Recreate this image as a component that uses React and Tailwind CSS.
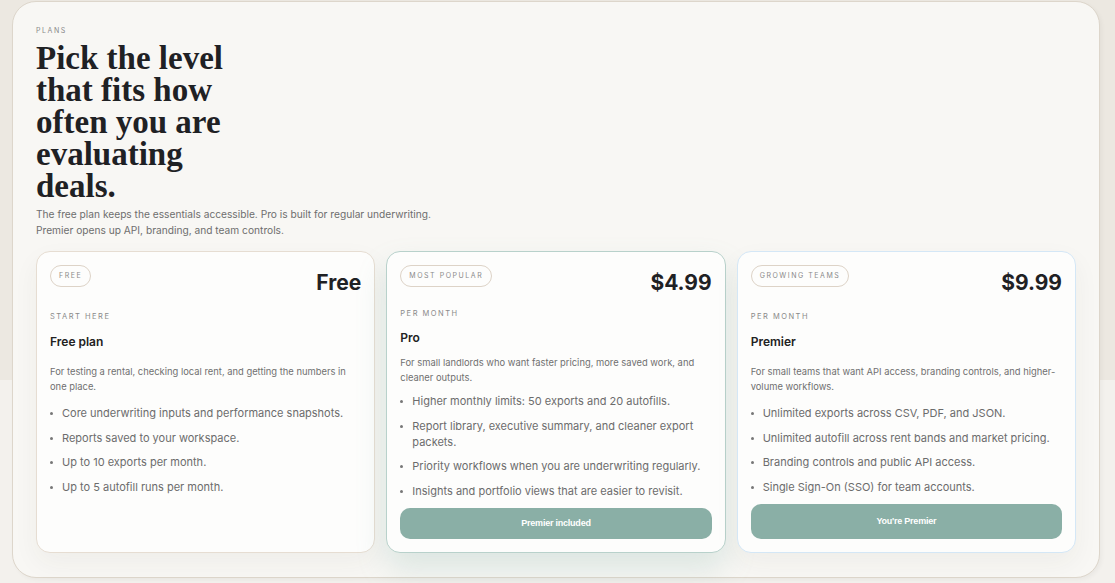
import React from 'react';

const plans = [
  {
    badge: 'FREE',
    price: 'Free',
    label: 'START HERE',
    name: 'Free plan',
    desc: 'For testing a rental, checking local rent, and getting the numbers in one place.',
    features: [
      'Core underwriting inputs and performance snapshots.',
      'Reports saved to your workspace.',
      'Up to 10 exports per month.',
      'Up to 5 autofill runs per month.',
    ],
    border: 'border-[#e6ddd2]',
    shadow: 'shadow-[0_10px_26px_rgba(60,50,40,0.05)]',
    tight: false,
  },
  {
    badge: 'MOST POPULAR',
    price: '$4.99',
    label: 'PER MONTH',
    name: 'Pro',
    desc: 'For small landlords who want faster pricing, more saved work, and cleaner outputs.',
    features: [
      'Higher monthly limits: 50 exports and 20 autofills.',
      'Report library, executive summary, and cleaner export packets.',
      'Priority workflows when you are underwriting regularly.',
      'Insights and portfolio views that are easier to revisit.',
    ],
    button: 'Premier included',
    border: 'border-[#b8d1cb]',
    shadow: 'shadow-[0_16px_30px_rgba(120,170,158,0.22)]',
    tight: true,
  },
  {
    badge: 'GROWING TEAMS',
    price: '$9.99',
    label: 'PER MONTH',
    name: 'Premier',
    desc: 'For small teams that want API access, branding controls, and higher-volume workflows.',
    features: [
      'Unlimited exports across CSV, PDF, and JSON.',
      'Unlimited autofill across rent bands and market pricing.',
      'Branding controls and public API access.',
      'Single Sign-On (SSO) for team accounts.',
    ],
    button: "You're Premier",
    border: 'border-[#d4e7f6]',
    shadow: 'shadow-[0_10px_26px_rgba(60,50,40,0.05)]',
    tight: false,
  },
];

const PlanCard = ({ plan }) => (
  <div className={`flex flex-col h-[302px] rounded-[14px] border bg-[#fdfdfc] px-[13px] pt-[13px] pb-[13px] ${plan.border} ${plan.shadow}`}>
    <div className="flex items-start justify-between">
      <span className="inline-flex h-[22px] items-center rounded-full border border-[#ddd3c7] px-[8px] text-[7px] tracking-[0.22em] text-[#8a8a8a]">
        {plan.badge}
      </span>
      <span className="mt-[7px] text-[21px] font-bold leading-none text-[#1f2124]">{plan.price}</span>
    </div>
    <div className={`${plan.tight ? 'mt-[16px]' : 'mt-[19px]'} text-[7.5px] leading-[10px] tracking-[0.2em] text-[#8a8a8a]`}>
      {plan.label}
    </div>
    <div className={`${plan.tight ? 'mt-[11px]' : 'mt-[12px]'} text-[12px] font-semibold leading-[16px] text-[#222]`}>
      {plan.name}
    </div>
    <p className={`${plan.tight ? 'mt-[9px]' : 'mt-[14px]'} text-[9.4px] leading-[15px] text-[#707070]`}>{plan.desc}</p>
    <ul className={`${plan.tight ? 'mt-[8px]' : 'mt-[11px]'} flex flex-col gap-[8.5px]`}>
      {plan.features.map((f) => (
        <li key={f} className="flex items-start text-[11px] leading-[16px] text-[#6c6c6c]">
          <span className="mr-[9px] mt-[7px] h-[3px] w-[3px] shrink-0 rounded-full bg-[#777]" />
          <span>{f}</span>
        </li>
      ))}
    </ul>
    {plan.button && (
      <button className={`mt-auto ${plan.tight ? 'h-[31px]' : 'h-[35px]'} w-full rounded-[10px] bg-[#8aafa6] text-[9px] font-bold tracking-tight text-white [font-family:'Liberation_Sans',sans-serif]`}>
        {plan.button}
      </button>
    )}
  </div>
);

export default function App() {
  return (
    <div className="min-h-[583px] w-full bg-[linear-gradient(to_bottom,#ece8e1_0,#ece8e1_380px,#f3f1ed_380px)] pl-[12px] pr-[15px] pt-[1px] pb-[6px] [font-family:Inter,'Liberation_Sans',sans-serif]">
      <div className="rounded-[24px] border border-[#ddd6cb] bg-[#f8f7f4] px-[23px] pt-[24px] pb-[24px] shadow-[2px_2px_4px_rgba(0,0,0,0.04)]">
        <div className="text-[7px] leading-[10px] tracking-[0.22em] text-[#8a8a8a]">PLANS</div>
        <h1 className="mt-[6px] max-w-[200px] text-[33px] font-bold leading-[32px] text-[#1f2124] [font-family:'Liberation_Serif',serif]">
          Pick the level that fits how often you are evaluating deals.
        </h1>
        <p className="mt-[4px] text-[10.2px] leading-[16px] text-[#6e6e6e]">
          The free plan keeps the essentials accessible. Pro is built for regular underwriting.
          <br />
          Premier opens up API, branding, and team controls.
        </p>
        <div className="mt-[13px] grid grid-cols-3 gap-[11px]">
          {plans.map((p) => (
            <PlanCard key={p.badge} plan={p} />
          ))}
        </div>
      </div>
    </div>
  );
}
